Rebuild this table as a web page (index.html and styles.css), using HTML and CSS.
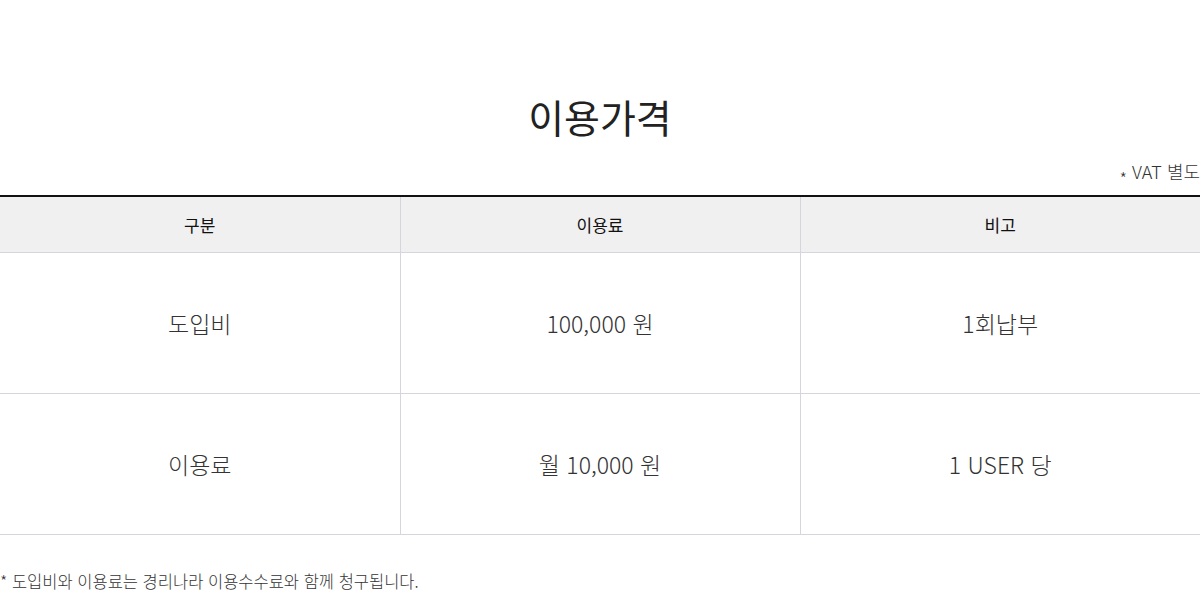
FILE: index.html
```html
<!DOCTYPE html>
<html lang="ko">
<head>
    <meta charset="UTF-8">
    <meta name="viewport" content="width=device-width, initial-scale=1.0">
    <title>이용가격</title>
    <link rel="stylesheet" href="styles.css">
</head>
<body>
    <div class="price">
        <h2 class="title">이용가격</h2>
        <p class="vat"><span class="mark">*</span> VAT 별도</p>
        <table class="price-table">
            <thead>
                <tr>
                    <th>구분</th>
                    <th>이용료</th>
                    <th>비고</th>
                </tr>
            </thead>
            <tbody>
                <tr>
                    <td>도입비</td>
                    <td>100,000 원</td>
                    <td>1회납부</td>
                </tr>
                <tr>
                    <td>이용료</td>
                    <td>월 10,000 원</td>
                    <td>1 USER 당</td>
                </tr>
            </tbody>
        </table>
        <p class="note">* 도입비와 이용료는 경리나라 이용수수료와 함께 청구됩니다.</p>
    </div>
</body>
</html>
```

FILE: styles.css
```css
body {
    margin: 0;
    padding: 0;
    font-family: "Noto Sans CJK KR", "Noto Sans", sans-serif;
    font-weight: 300;
    color: #222;
    background-color: #fff;
}
.price {
    width: 1200px;
    padding-top: 88px;
}
.title {
    margin: 0;
    text-align: center;
    font-size: 39px;
    font-weight: 400;
    line-height: 56px;
    color: #222;
}
.vat {
    margin: 0;
    padding-top: 15px;
    height: 36px;
    text-align: right;
    font-size: 18px;
    line-height: 24px;
    color: #333;
}
.vat .mark {
    font-size: 17px;
    position: relative;
    top: 6px;
}
.price-table {
    width: 100%;
    border-collapse: collapse;
    table-layout: fixed;
    border-top: 2px solid #111;
}
.price-table th {
    height: 55px;
    padding: 0;
    background-color: #f0f0f0;
    font-size: 17px;
    font-weight: 400;
    color: #111;
    border-bottom: 1px solid #d6d4df;
    border-left: 1px solid #d6d4df;
}
.price-table td {
    height: 140px;
    padding: 0;
    text-align: center;
    font-size: 23px;
    color: #333;
    border-bottom: 1px solid #d6d4df;
    border-left: 1px solid #d6d4df;
}
.price-table th:first-child,
.price-table td:first-child {
    border-left: none;
}
.note {
    margin: 0;
    padding-top: 35px;
    font-size: 16.5px;
    line-height: 22px;
    color: #333;
}
```
